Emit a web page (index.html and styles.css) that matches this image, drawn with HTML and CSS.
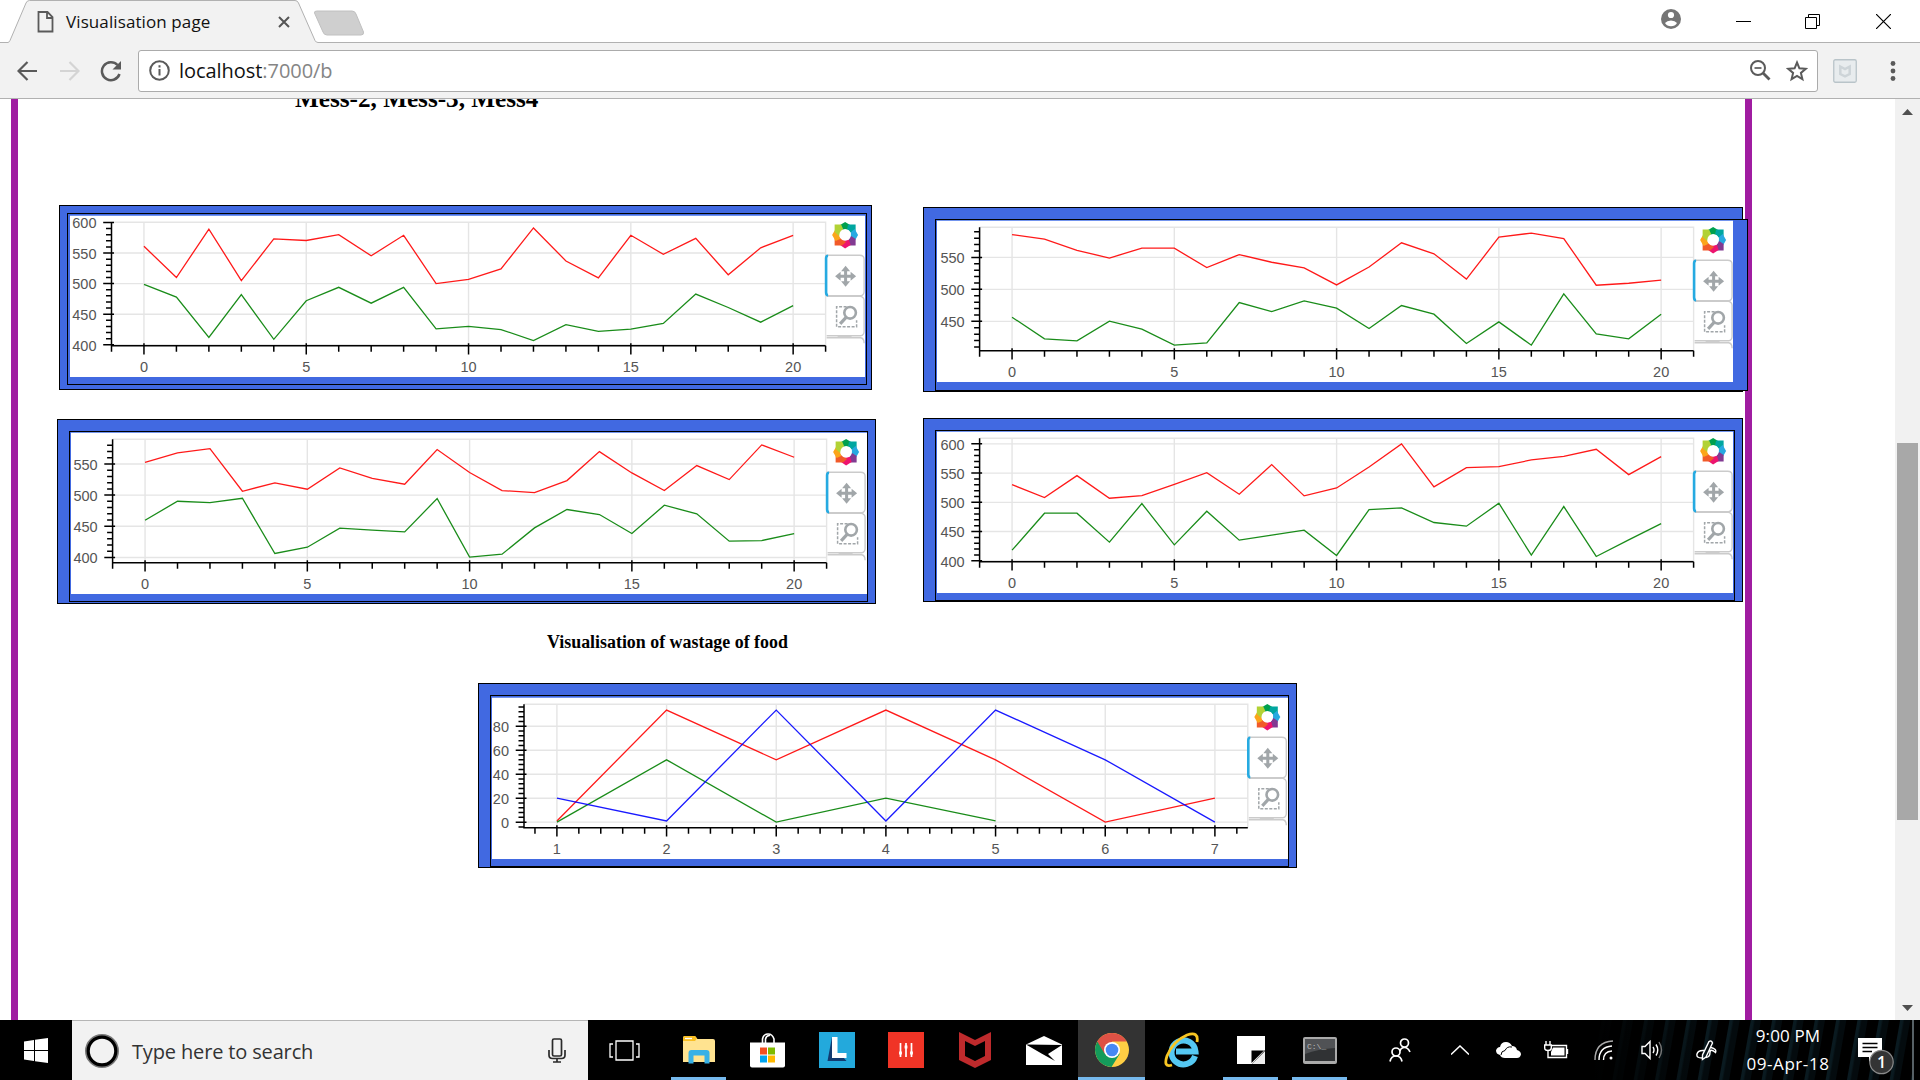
FILE: index.html
```html
<!DOCTYPE html>
<html lang="en">
<head>
<meta charset="utf-8">
<title>Visualisation page</title>
<link rel="stylesheet" href="styles.css">
</head>
<body>
<div class="screen">
  <header class="tabstrip">
    <svg class="tab-shape" width="380" height="43" viewBox="0 0 380 43">
      <path d="M0 42.5H8Q9.500 42 10 40.500L26 3Q27 .5 29.500 .5H295Q297.500 .5 298.500 3L315 40.500Q316 42.500 318 42.500H380V43H0z" fill="#f2f2f2"/>
      <path d="M0 42.500H8Q9.500 42 10 40.500L26 3Q27 .5 29.500 .5H295Q297.500 .5 298.500 3L315 40.500Q316 42.500 318 42.500H380" fill="none" stroke="#b1b1b1"/>
      <path d="M317 11H352Q355 11 356 14L363.500 32Q364 35 361 35H327Q324 35 323 32L314.500 13Q314 11 317 11z" fill="#cfcfcf" stroke="#c0c0c0"/>
    </svg>
    <div class="tab">
      <svg width="17" height="22" viewBox="0 0 17 22" fill="none" stroke="#5a5a5a" stroke-width="1.800"><path d="M1.500 1H10.500L15.500 6V20.500H1.500zM10 1V7H15.500"/></svg>
      <span class="tab-title">Visualisation page</span>
      <svg class="tab-close" width="12" height="12" viewBox="0 0 12 12" stroke="#555" stroke-width="2"><path d="M1 1L11 11M11 1L1 11"/></svg>
    </div>
    <div class="window-controls">
      <svg width="20" height="20" viewBox="0 0 20 20"><circle cx="10" cy="10" r="10" fill="#757575"/><circle cx="10" cy="6" r="3.100" fill="#fff"/><path d="M4 14Q6 11.500 10 11.500T16 14Q14 17.300 10 17.300T4 14z" fill="#fff"/></svg>
      <svg width="15" height="15" viewBox="0 0 15 15" stroke="#000"><path d="M0 7.500H15"/></svg>
      <svg width="15" height="15" viewBox="0 0 15 15" stroke="#000" fill="none"><path d="M.5 3.500H11.500V14.500H.5zM3.500 3V.5H14.500V11.500H12"/></svg>
      <svg width="15" height="15" viewBox="0 0 15 15" stroke="#000" stroke-width="1.200"><path d="M0 0L15 15M15 0L0 15"/></svg>
    </div>
  </header>

  <nav class="toolbar">
    <svg width="20" height="20" viewBox="0 0 20 20" fill="none" stroke="#5a5a5a" stroke-width="2.200"><path d="M20 10H1.500M10.500 1L1.500 10L10.500 19"/></svg>
    <svg width="20" height="20" viewBox="0 0 20 20" fill="none" stroke="#d4d4d4" stroke-width="2.200"><path d="M0 10H18.500M9.500 1L18.500 10L9.500 19"/></svg>
    <svg width="22" height="22" viewBox="0 0 22 22"><path d="M19.500 14A9 9 0 1 1 17.500 5" fill="none" stroke="#5a5a5a" stroke-width="2.500"/><path d="M21 1V9.500H12.500z" fill="#5a5a5a"/></svg>
    <div class="omnibox">
      <svg width="21" height="21" viewBox="0 0 21 21"><circle cx="10.500" cy="10.500" r="9.300" fill="none" stroke="#5a5a5a" stroke-width="2"/><path d="M10.500 9V15.500M10.500 5.300V7.500" stroke="#5a5a5a" stroke-width="2"/></svg>
      <span class="url">localhost<span class="url-rest">:7000/b</span></span>
      <svg class="omni-zoom" width="21" height="21" viewBox="0 0 21 21" fill="none" stroke="#5a5a5a"><circle cx="8" cy="8" r="7" stroke-width="2"/><path d="M4.500 8H11.500" stroke-width="1.700"/><path d="M13 13L19.500 19.500" stroke-width="2.800"/></svg>
      <svg width="22" height="22" viewBox="0 0 22 22" fill="none" stroke="#5a5a5a" stroke-width="2"><path d="M11 2.500L13.400 8.300L19.700 8.800L14.900 12.900L16.400 19.100L11 15.800L5.600 19.100L7.100 12.900L2.300 8.800L8.600 8.300z"/></svg>
    </div>
    <svg class="extension" width="24" height="24" viewBox="0 0 24 24"><rect x=".75" y=".75" width="22.500" height="22.500" rx="1.500" fill="#e8ecee" stroke="#b9c4c9" stroke-width="1.300"/><path d="M7.300 7.500L12 10L16.700 7.500V15L12 17.300L7.300 15z" fill="none" stroke="#cdd4d8" stroke-width="2.500"/></svg>
    <svg class="menu" width="6" height="20" viewBox="0 0 6 20" fill="#5a5a5a"><circle cx="3" cy="2.500" r="2.400"/><circle cx="3" cy="10" r="2.400"/><circle cx="3" cy="17.500" r="2.400"/></svg>
  </nav>

  <div class="viewport">
    <main class="sheet">
      <h2 class="mess-title">Mess-2, Mess-3, Mess4</h2>
      <div class="row row-first">
        <section class="frame frame-a"><div class="plot-box"><svg class="plot" data-chart="a"></svg></div></section>
        <section class="frame frame-b"><div class="plot-box"><svg class="plot" data-chart="b"></svg></div></section>
      </div>
      <div class="row row-second">
        <section class="frame frame-c"><div class="plot-box"><svg class="plot" data-chart="c"></svg></div></section>
        <section class="frame frame-d"><div class="plot-box"><svg class="plot" data-chart="d"></svg></div></section>
      </div>
      <h3 class="waste-title">Visualisation of wastage of food</h3>
      <section class="frame frame-e"><div class="plot-box"><svg class="plot" data-chart="e"></svg></div></section>
    </main>
    <aside class="scrollbar">
      <svg width="11" height="6" viewBox="0 0 11 6"><path d="M0 6L5.500 0L11 6z" fill="#505050"/></svg>
      <div class="thumb"></div>
      <svg width="11" height="6" viewBox="0 0 11 6"><path d="M0 0L5.500 6L11 0z" fill="#505050"/></svg>
    </aside>
  </div>

  <footer class="taskbar">
    <div class="start"><svg width="24" height="25" viewBox="0 0 24 25" fill="#fff"><path d="M0 3.500L10 2V12H0zM11 1.800L24 0V12H11zM0 13H10V23L0 21.500zM11 13H24V25L11 23.200z"/></svg></div>
    <div class="search">
      <svg width="36" height="36" viewBox="0 0 36 36" fill="none"><circle cx="18" cy="18" r="15.500" stroke="#777" stroke-width="3"/><circle cx="18" cy="18" r="13.800" stroke="#000" stroke-width="3.200"/></svg>
      <span class="search-text">Type here to search</span>
      <svg width="18" height="25" viewBox="0 0 18 25" fill="none" stroke="#2b2b2b" stroke-width="1.700"><rect x="4.500" y="1" width="9" height="17" rx="1.500"/><path d="M1 12V17Q1 20.500 4.500 20.500H13.500Q17 20.500 17 17V12M9 20.500V24M5 24H13"/></svg>
    </div>
    <div class="app task-view"><svg width="31" height="21" viewBox="0 0 31 21" fill="none" stroke="#fff" stroke-width="1.300"><path d="M7 1H24V20H7zM4 4H1V17H4M27 4H30V17H27"/></svg></div>
    <div class="app open"><svg width="32" height="28" viewBox="0 0 32 28"><path d="M0 2Q0 0 2 0H12L14.500 3H30Q32 3 32 5V26H0z" fill="#ffe390"/><path d="M0 5V2Q0 0 2 0H12L14 2.500L12 5z" fill="#f9bf23"/><path d="M2 2.500H9" stroke="#fff" stroke-width="1.300"/><path d="M5.500 27.500V17Q5.500 14 8.500 14H23.500Q26.500 14 26.500 17V27.500H21.500V19.500H10.500V27.500z" fill="#38b1e6"/></svg></div>
    <div class="app"><svg width="35" height="35" viewBox="0 0 35 35"><path d="M12.500 10V6Q13.500 1 18 1T24 6V10M15.500 10V6Q16.500 2 20 2.500" fill="none" stroke="#fff" stroke-width="1.600"/><path d="M0 9.500H35V32.500Q35 34.500 33 34.500H2Q0 34.500 0 32.500z" fill="#fff"/><path d="M10 14.500H17V21.500H10z" fill="#f25022"/><path d="M18 14.500H25V21.500H18z" fill="#7fba00"/><path d="M10 22.500H17V29.500H10z" fill="#00a4ef"/><path d="M18 22.500H25V29.500H18z" fill="#ffb900"/></svg></div>
    <div class="app"><svg width="36" height="36" viewBox="0 0 36 36"><path d="M0 0H36V36H0z" fill="#23a9dc"/><path d="M13 5L8.500 29H27.500L24 25H13z" fill="#123b70"/><path d="M13 5H18.500V21H27.500V26H13z" fill="#fff"/></svg></div>
    <div class="app"><svg width="36" height="36" viewBox="0 0 36 36"><path d="M0 0H36V36H0z" fill="#f03426"/><path d="M12.500 11V25M18 11V25M23.500 11V25" stroke="#fff" stroke-width="1.700"/><path d="M12.500 19.500V22.500M18 13.500V16.500M23.500 19.500V22.500" stroke="#fff" stroke-width="2.800"/></svg></div>
    <div class="app"><svg width="32" height="36" viewBox="0 0 32 36"><path d="M0 0L16 8L32 0V28L16 36L0 28zM6 9V24L16 29L26 24V9L16 14z" fill="#be2a2c" fill-rule="evenodd"/></svg></div>
    <div class="app"><svg width="36" height="29" viewBox="0 0 36 29"><path d="M0 8.500L18 0L36 8.500V29H0z" fill="#fff"/><path d="M0 8.500L36 9L22 18L29 25L15.500 17.500z" fill="#000"/></svg></div>
    <div class="app open active"><svg width="34" height="34" viewBox="0 0 34 34"><circle cx="17" cy="17" r="17" fill="#ffce44"/><path d="M17 17L2.300 8.500A17 17 0 0 0 16.500 34L24.800 20.800z" fill="#149b5b"/><path d="M17 17L9.500 20.500L2.300 8.500A17 17 0 0 1 31.700 8.500H17z" fill="#de5145"/><circle cx="17" cy="17" r="8" fill="#fff"/><circle cx="17" cy="17" r="6.300" fill="#4688f4"/></svg></div>
    <div class="app"><svg width="36" height="36" viewBox="0 0 36 36"><path d="M31 24A12 12 0 1 1 31.500 19.500H12" fill="none" stroke="#55c8f2" stroke-width="6"/><path d="M8 33Q-1 36 3 24Q9 9 23 3Q35-1 33 10" fill="none" stroke="#f8c522" stroke-width="2.800"/></svg></div>
    <div class="app open"><svg width="28" height="28" viewBox="0 0 28 28"><path d="M0 0H28V14L15 28H0z" fill="#fff"/><path d="M14.500 27V14.500H27z" fill="#000"/><path d="M28 15V28H15z" fill="#eee"/></svg></div>
    <div class="app open"><svg width="34" height="27" viewBox="0 0 34 27"><rect width="34" height="27" rx="2" fill="#aaa"/><rect x="2" y="2" width="30" height="22" fill="#303234"/><path d="M2 2H32V11Q15 12 2 17z" fill="#505255"/><text class="prompt" x="4" y="12">C:\_</text></svg></div>

    <div class="tray">
      <div class="tray-item people"><svg width="22" height="24" viewBox="0 0 22 24" fill="none" stroke="#fff" stroke-width="1.700"><circle cx="15.500" cy="5" r="4"/><path d="M11 13Q12 9.500 15.500 9.500T21 14"/><circle cx="7" cy="14" r="4"/><path d="M1 23.500Q2 18 7 18T13 23.500"/></svg></div>
      <div class="tray-item"><svg width="18" height="10" viewBox="0 0 18 10" fill="none" stroke="#fff" stroke-width="1.500"><path d="M0 9.500L9 1L18 9.500"/></svg></div>
      <div class="tray-item"><svg width="25" height="16" viewBox="0 0 25 16"><path d="M4 13Q0 12 0 8.500Q1 5 4 5Q5 0 10 0Q14 0 16 4Q20 4 21 8Q25 9 25 12.500Q24 16 21 16H9Q5 16 4 13z" fill="#fff"/><path d="M5 13Q5 9 9 8.500Q11 4 16 5" fill="none" stroke="#000"/></svg></div>
      <div class="tray-item"><svg width="25" height="18" viewBox="0 0 25 18" fill="none" stroke="#fff" stroke-width="1.400"><path d="M8 4.500H22.500V16.500H4V11M23.500 8V13M2 0V4M6 0V4M.7 4H7.300V7Q7.300 9.500 4 9.500T.7 7zM4 9.500V14"/><path d="M9 6.500H20.500V14.500H7V11z" fill="#fff" stroke="none"/></svg></div>
      <div class="tray-item"><svg width="20" height="20" viewBox="0 0 20 20" fill="none" stroke="#fff" stroke-width="1.400"><path d="M1 20Q1 2 19 1" stroke="#aaa"/><path d="M5 20Q5 7 18 6M9.500 20Q9.500 11.500 18 11"/><circle cx="17" cy="18" r="1.500" fill="#fff" stroke="none"/></svg></div>
      <div class="tray-item"><svg width="22" height="20" viewBox="0 0 22 20" fill="none" stroke="#fff" stroke-width="1.400"><path d="M1 6.500H4L9 1.500V18.500L4 13.500H1zM12 7Q14 10 12 13M15 4.500Q18.500 10 15 15.500"/><path d="M18 2Q23 10 18 18" stroke="#777"/></svg></div>
      <div class="tray-item pen"><svg width="21" height="21" viewBox="0 0 21 21" fill="none" stroke="#fff" stroke-width="1.400"><path d="M13 1.500Q15.500 0 16.500 3L10 17L6.500 19.500L6.500 15zM8 10.500Q2 10 1 14T6 18M10 17.500Q14 17 14 12.500T19.500 12.500Q21 9 15 7.500"/></svg></div>
      <div class="clock"><span class="time">9:00 PM</span><span class="date">09-Apr-18</span></div>
      <div class="action-center">
        <svg width="36" height="37" viewBox="0 0 36 37"><path d="M0 0H24V19H15L11 24V19H0z" fill="#fff"/><path d="M4.500 5.500H19.500M4.500 9.500H19.500M4.500 13.500H14" stroke="#000" stroke-width="1.300"/><circle cx="23.500" cy="24" r="11.700" fill="#343434" stroke="#8b8b8b" stroke-width="1.200"/><text class="badge-count" x="23.500" y="29.500">1</text></svg>
      </div>
      <div class="show-desktop"></div>
    </div>
  </footer>
</div>

<svg class="defs" width="0" height="0">
  <symbol id="plot-tools" viewBox="0 0 44 130" overflow="visible">
    <g transform="translate(22.500 12.600)">
      <path d="M-5-10L0-13L5-10L3-5L-4-4z" fill="#00a04e"/><path d="M3-10.500H10.500V-3L6-2L2-6z" fill="#00a6a0"/><path d="M9.500-6L13 0L9.500 6L5 2L6-3z" fill="#27a9e1"/><path d="M6 1L10.500 4V10.500H4L2.500 6z" fill="#823a92"/><path d="M4 5L5.500 10L0 13.500L-5 10L-3 5z" fill="#ed146f"/><path d="M1 7L-3 10.500H-10.500V3L-6 2z" fill="#f15a29"/><path d="M-5 4L-9.500 6L-13 0L-9.500-6L-6-2z" fill="#fba51a"/><path d="M-6 1L-10.500-3V-10.500H-4L-2-6z" fill="#b2d235"/>
      <circle r="5.800" fill="#fff"/>
    </g>
    <path d="M3 33H37Q41.500 33 41.500 37V69Q41.500 73 38 73.500H4M4 74H38Q41.500 75 41.500 78V109Q41.500 113 38 113.500H4M4 115.500H38Q41.500 116 41.500 121" fill="none" stroke="#cbcbcb" stroke-width="1.400"/>
    <path d="M15 114.500H29" stroke="#ccc" stroke-width="1.500"/>
    <path d="M5.500 33.500Q3.500 33.500 3.500 36V70Q3.500 73 5.500 73" fill="none" stroke="#26aae1" stroke-width="2.600"/>
    <g fill="#a1a6a9"><path d="M21.500 46H24.500V62H21.500zM15 52.500H31V55.500H15z"/><path d="M23 43.500L27.500 49H18.500zM23 64.500L18.500 59H27.500zM12.500 54L18 49.500V58.500zM33.500 54L28 49.500V58.500z"/></g>
    <path d="M24 84.500H14V104.500H34V98" fill="none" stroke="#a1a6a9" stroke-width="1.500" stroke-dasharray="3 1.500"/>
    <circle cx="27.500" cy="90.500" r="5.800" fill="none" stroke="#a1a6a9" stroke-width="2.600"/><path d="M23.500 95L17.500 101.500" stroke="#a1a6a9" stroke-width="3.200"/>
  </symbol>
</svg>
<script src="charts.js"></script>
</body>
</html>
```
FILE: styles.css
```css
* { box-sizing: border-box; }
body { margin: 0; background: #fff; font-family: "Open Sans", "Noto Sans", sans-serif; overflow: hidden; }
svg { display: block; flex: none; }
.defs { position: absolute; }
.screen { width: 1920px; height: 1080px; display: flex; flex-direction: column; overflow: hidden; }

.tabstrip { height: 43px; flex: none; display: grid; grid-template-columns: 380px 1fr; border-bottom: 0; background: linear-gradient(#b1b1b1, #b1b1b1) 380px 42px / 1540px 1px no-repeat #fff; }
.tab-shape { grid-area: 1 / 1; }
.tab { grid-area: 1 / 1; display: flex; align-items: center; padding: 0 90px 0 37px; height: 44px; }
.tab-title { font-size: 17px; letter-spacing: .1px; margin: -2px 0 0 12px; color: #111; white-space: nowrap; }
.tab-close { margin-left: auto; }
.window-controls { display: flex; justify-content: flex-end; align-items: center; gap: 54px; padding: 0 29px 2px 0; }
.window-controls svg:first-child { margin: -4px 1px 0 0; }
.window-controls svg:last-child { margin-left: 2px; }

.toolbar { height: 56px; flex: none; display: flex; align-items: center; background: #f2f2f2; border-bottom: 1px solid #b1b1b1; padding: 0 24px 0 17px; }
.toolbar > svg:nth-child(2) { margin-left: 23px; }
.toolbar > svg:nth-child(3) { margin-left: 20px; }
.omnibox { width: 1680px; height: 42px; margin-left: 16px; border: 1px solid #ababab; border-radius: 3px; background: #fff; display: flex; align-items: center; padding: 0 9px 0 10px; }
.url { font-size: 20px; margin-left: 9px; letter-spacing: -.05px; color: #111; }
.url-rest { color: #858585; }
.omni-zoom { margin-left: auto; margin-right: 15px; }
.extension { margin-left: 15px; }
.menu { margin-left: auto; }

.viewport { height: 921px; flex: none; display: flex; background: #fff; overflow: hidden; }
.sheet { width: 1741px; margin-left: 11px; border: solid #a01ca1; border-width: 0 7px; font-family: "Liberation Serif", "Times New Roman", serif; }
.mess-title { margin: -16px 0 0 277px; height: 32px; line-height: 31px; font-size: 25.200px; white-space: nowrap; }
.row { display: flex; align-items: flex-start; }
.row-first { height: 187px; margin-top: 90px; padding-left: 41px; }
.row-second { height: 186px; margin-top: 26px; padding-left: 39px; }
.waste-title { margin: 28px 0 0 529px; height: 20px; line-height: 21px; font-size: 17.900px; white-space: nowrap; }

.frame { flex: none; width: 819px; height: 185px; border: 1px solid #000; background: #4169e1; padding: 11px 0 0 11px; }
.plot-box { width: 800px; height: 172px; border: 1px solid #000; background: #4169e1; padding: 1px 0 0 1px; }
.plot { width: 796px; height: 161px; background: #fff; box-shadow: 0 -1px #7395ee; font-family: "Liberation Sans", Arial, sans-serif; font-size: 14.500px; overflow: hidden; }
.frame-a { width: 813px; padding: 7px 0 0 7px; }
.frame-a .plot-box { padding: 2px 0 0 2px; }
.frame-a .plot { width: 795px; }
.frame-b { width: 820px; margin: 2px 0 0 51px; }
.frame-b .plot-box { width: 813px; }
.frame-c { margin-top: 1px; }
.frame-c .plot-box { width: 799px; height: 171px; }
.frame-d { width: 820px; height: 184px; margin-left: 47px; }
.frame-d .plot-box { height: 171px; }
.frame-e { margin: 31px 0 0 460px; }
.frame-e .plot-box { width: 799px; padding-top: 2px; }

.grid { stroke: #e5e5e5; stroke-width: 1.400; fill: none; }
.axis { stroke: #000; stroke-width: 1.500; fill: none; }
.tick-label { fill: #555; }
.line { fill: none; stroke-width: 1.300; stroke-opacity: .9; }

.scrollbar { width: 25px; margin-left: auto; background: #f1f1f1; display: flex; flex-direction: column; align-items: center; padding: 10px 0 9px; }
.thumb { width: 21px; height: 377px; margin: 328px 0 auto; background: #a8a8a8; }

.taskbar { height: 60px; flex: none; display: flex; background: #000; color: #fff; }
.start { width: 72px; display: flex; align-items: center; justify-content: center; }
.search { width: 516px; background: #f2f2f2; border-top: 1px solid #b5b5b5; display: flex; align-items: center; padding: 0 22px 0 12px; }
.search-text { font-size: 20px; color: #333; letter-spacing: -.15px; margin: 1px auto 0 12px; white-space: nowrap; }
.app { width: 69px; display: flex; align-items: center; justify-content: center; }
.task-view { width: 76px; padding-right: 4px; }
.open { background: linear-gradient(#76b9ed, #76b9ed) 7px 57px / 55px 3px no-repeat; }
.active { background: linear-gradient(#76b9ed, #76b9ed) 0 57px / 67px 3px no-repeat, linear-gradient(#333, #333) 0 0 / 67px 60px no-repeat; padding-right: 2px; }
.prompt { font: 8px "Liberation Mono", monospace; fill: #bbb; }
.tray { flex: 1; display: flex; background: linear-gradient(90deg, #000, transparent 35%) 240px 0 / 320px 60px no-repeat, repeating-linear-gradient(100deg, transparent 0 7px, #0a1a20 8px 10px, #040b0e 12px 17px, transparent 18px 21px) 240px 0 / 320px 60px no-repeat; }
.tray-item { width: 48px; display: flex; align-items: center; justify-content: center; }
.people { width: 82px; padding-left: 9px; }
.pen { width: 60px; }
.clock { width: 104px; display: flex; flex-direction: column; align-items: center; font-size: 17px; line-height: 28px; padding-top: 2px; white-space: nowrap; }
.time { letter-spacing: .15px; }
.date { letter-spacing: .55px; }
.action-center { padding: 18px 0 0 18px; }
.badge-count { font-size: 16px; font-weight: 600; fill: #fff; text-anchor: middle; }
.show-desktop { width: 8px; margin-left: auto; border-left: 2px solid #566065; }
```
FILE: charts.js
```js
const charts = {
  a: { left: 41.5, right: 755.6, x0: -1, x1: 21, y0: 398.4, y1: 600.2, yStep: 50, yMinor: 10, xStep: 5, xMinor: 1, lines: {
    red: [561, 510, 589, 505, 573, 570.5, 580, 545.5, 579, 500, 507, 524, 591, 537, 509.5, 579, 548, 574, 514.5, 558.5, 579],
    green: [498.6, 478, 412, 482, 409, 472, 494, 468, 494, 426, 430, 425, 407, 433, 422, 425.6, 435, 483, 461, 437, 464] } },
  b: { left: 42.6, right: 756.6, x0: -1, x1: 21, y0: 404, y1: 597, yStep: 50, yMinor: 10, xStep: 5, xMinor: 1, lines: {
    red: [585.7, 578.4, 561, 549, 564.3, 564.3, 534, 554.4, 542.4, 533.6, 507, 535, 572.7, 555.5, 516, 581.5, 588, 579.4, 506.5, 509.6, 514.3],
    green: [456.5, 422.7, 419.5, 450.3, 437.8, 412.8, 416.4, 479.4, 465.4, 482, 470.6, 438.8, 474.7, 461.2, 415.4, 449.2, 412.8, 493, 430.5, 422.7, 461.2] } },
  c: { left: 41.6, right: 755.6, x0: -1, x1: 21, y0: 391.5, y1: 589.5, yStep: 50, yMinor: 10, xStep: 5, xMinor: 1, lines: {
    red: [552.7, 567.6, 574.6, 506.2, 519.6, 509.4, 543.6, 527, 517.5, 573, 536.2, 507.3, 504.1, 523.3, 569.8, 535.6, 507.3, 547.4, 524.9, 580.5, 560.7],
    green: [459.8, 490.2, 488.1, 495, 406.4, 416.5, 447, 443.8, 441.1, 494.5, 400.5, 405.3, 447.5, 476.9, 468.9, 438.4, 483.8, 470, 426.2, 427.2, 438.4] } },
  d: { left: 42.6, right: 756.6, x0: -1, x1: 21, y0: 398.3, y1: 609.5, yStep: 50, yMinor: 10, xStep: 5, xMinor: 1, lines: {
    red: [530.3, 508.1, 545.7, 507, 511.6, 530.9, 550.8, 513.8, 564.5, 511, 524.6, 560.5, 599.8, 526.4, 559.4, 561, 572.5, 578.7, 590.7, 547.4, 578.1],
    green: [418.2, 481.4, 481.4, 431.9, 497.9, 427.3, 484.8, 435.3, 443.8, 452.4, 409.1, 487.6, 490.5, 465.5, 459.2, 498.5, 409.7, 492.8, 407.4, 435.9, 463.7] } },
  e: { left: 32, right: 755.8, x0: 0.7, x1: 7.3, y0: -4.7, y1: 98.3, yStep: 20, yMinor: 4, xStep: 1, xMinor: 0.2, start: 1, lines: {
    red: [1, 93.5, 52, 93.5, 52, 0, 20],
    green: [0, 52, 0, 20, 1],
    blue: [20, 1, 93.5, 1, 93.5, 52, 0] } }
};

const TOP = 6.3, BOTTOM = 129.8;

function range(lo, hi, step) {
  const out = [];
  for (let i = Math.ceil(lo / step - 1e-6); i * step <= hi + 1e-6; i++) out.push(Math.round(i * step * 10) / 10);
  return out;
}

for (const svg of document.querySelectorAll('.plot')) {
  const c = charts[svg.dataset.chart];
  const X = v => c.left + (v - c.x0) / (c.x1 - c.x0) * (c.right - c.left);
  const Y = v => BOTTOM - (v - c.y0) / (c.y1 - c.y0) * (BOTTOM - TOP);
  const xs = range(c.x0, c.x1, c.xStep), ys = range(c.y0, c.y1, c.yStep);
  let grid = `M${c.left} ${TOP}H${c.right}V${BOTTOM}`, axis = `M${c.left} ${TOP}V${BOTTOM}H${c.right}`, labels = '';
  for (const v of xs) {
    grid += `M${X(v)} ${TOP}V${BOTTOM}`;
    axis += `M${X(v)} ${BOTTOM - 2.5}V${BOTTOM + 8.7}`;
    labels += `<text class="tick-label" text-anchor="middle" x="${X(v)}" y="${BOTTOM + 26}">${v}</text>`;
  }
  for (const v of ys) {
    grid += `M${c.left} ${Y(v)}H${c.right}`;
    axis += `M${c.left - 8.3} ${Y(v)}H${c.left + 2.5}`;
    labels += `<text class="tick-label" text-anchor="end" x="${c.left - 15}" y="${Y(v) + 5.8}">${v}</text>`;
  }
  for (const v of range(c.x0, c.x1, c.xMinor)) axis += `M${X(v)} ${BOTTOM}V${BOTTOM + 6}`;
  for (const v of range(c.y0, c.y1, c.yMinor)) axis += `M${c.left - 5.5} ${Y(v)}H${c.left}`;
  let lines = '';
  for (const [color, data] of Object.entries(c.lines))
    lines += `<polyline class="line" stroke="${color}" points="${data.map((v, i) => X(i + (c.start || 0)) + ',' + Y(v)).join(' ')}"/>`;
  svg.innerHTML = `<path class="grid" d="${grid}"/>${lines}<path class="axis" d="${axis}"/>${labels}<use href="#plot-tools" x="${c.right - 3}" y="6.3" width="44" height="130"/>`;
}
```
